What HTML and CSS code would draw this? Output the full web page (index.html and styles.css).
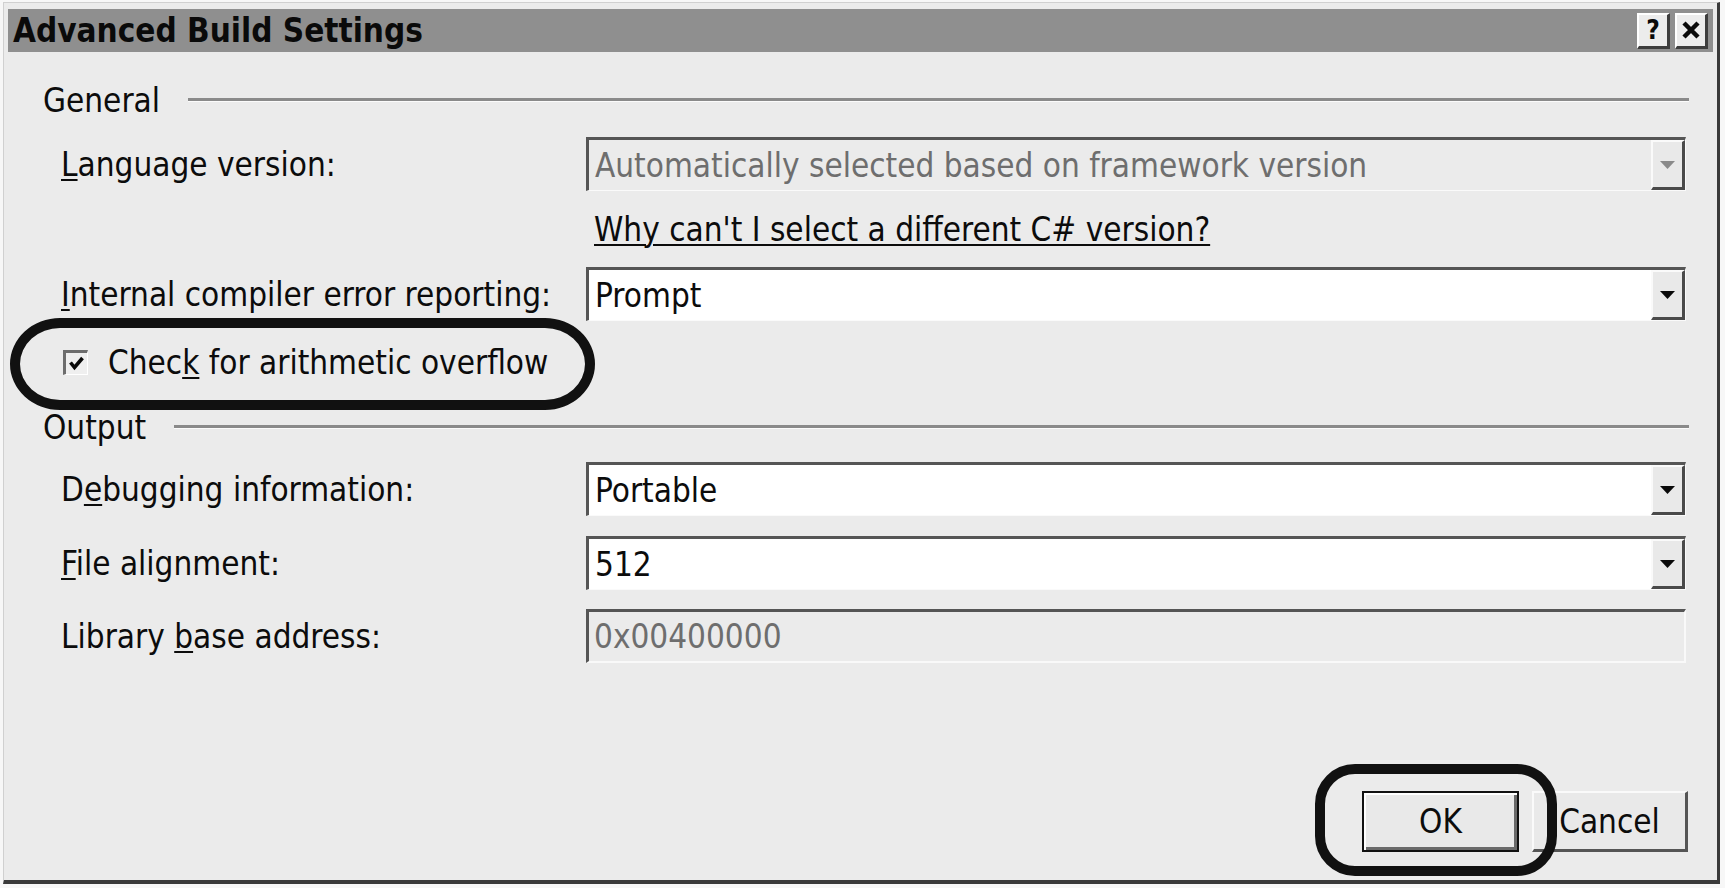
FILE: index.html
```html
<!DOCTYPE html>
<html lang="en">
<head>
<meta charset="utf-8">
<title>Advanced Build Settings</title>
<link rel="stylesheet" href="styles.css">
</head>
<body>
<div class="window">
  <div class="titlebar">
    <span class="title">Advanced Build Settings</span>
    <div class="caption-buttons">
      <span class="cap-btn help">?</span>
      <span class="cap-btn close">
        <svg width="18" height="18" viewBox="0 0 18 18"><path d="M2 2 L16 16 M16 2 L2 16" stroke="#0a0a0a" stroke-width="4.5" fill="none"/></svg>
      </span>
    </div>
  </div>
  <div class="content">
    <div class="group-header"><span class="group-title">General</span><span class="rule"></span></div>

    <div class="field f-lang">
      <span class="label"><u>L</u>anguage version:</span>
      <div class="combo disabled">
        <span class="value">Automatically selected based on framework version</span>
        <span class="drop"><svg width="15" height="8" viewBox="0 0 15 8"><polygon points="0,0 15,0 7.5,8" class="arrow"/></svg></span>
      </div>
    </div>

    <div class="field f-link">
      <span class="label"></span>
      <span class="link">Why can't I select a different C# version?</span>
    </div>

    <div class="field">
      <span class="label"><u>I</u>nternal compiler error reporting:</span>
      <div class="combo">
        <span class="value">Prompt</span>
        <span class="drop"><svg width="15" height="8" viewBox="0 0 15 8"><polygon points="0,0 15,0 7.5,8" class="arrow"/></svg></span>
      </div>
    </div>

    <div class="check-row">
      <span class="checkbox"><svg width="17" height="17" viewBox="0 0 17 17"><path d="M2.5 7.5 L6.5 12.5 L14.5 3" stroke="#0a0a0a" stroke-width="3.6" fill="none"/></svg></span>
      <span class="check-label">Chec<u>k</u> for arithmetic overflow</span>
    </div>

    <div class="group-header g-output"><span class="group-title">Output</span><span class="rule"></span></div>

    <div class="field f-gap">
      <span class="label">D<u>e</u>bugging information:</span>
      <div class="combo">
        <span class="value">Portable</span>
        <span class="drop"><svg width="15" height="8" viewBox="0 0 15 8"><polygon points="0,0 15,0 7.5,8" class="arrow"/></svg></span>
      </div>
    </div>

    <div class="field f-gap">
      <span class="label"><u>F</u>ile alignment:</span>
      <div class="combo">
        <span class="value">512</span>
        <span class="drop"><svg width="15" height="8" viewBox="0 0 15 8"><polygon points="0,0 15,0 7.5,8" class="arrow"/></svg></span>
      </div>
    </div>

    <div class="field f-gap f-last">
      <span class="label">Library <u>b</u>ase address:</span>
      <div class="textbox disabled">0x00400000</div>
    </div>

    <div class="buttons">
      <span class="btn default">OK</span>
      <span class="btn">Cancel</span>
    </div>

    <div class="mark mark-check"></div>
    <div class="mark mark-ok"></div>
  </div>
</div>
</body>
</html>
```

FILE: styles.css
```css
html, body {
  margin: 0;
  padding: 0;
}

body {
  background: #f7f7f7;
  font-family: "DejaVu Sans Condensed", "DejaVu Sans", sans-serif;
  font-stretch: condensed;
  color: #0c0c0c;
  width: 1725px;
  height: 888px;
  overflow: hidden;
}

.window {
  box-sizing: border-box;
  width: 1717px;
  height: 882px;
  margin: 2px 0 0 3px;
  background: #ebebeb;
  border-top: 1px solid #d0d0d0;
  border-left: 1px solid #d0d0d0;
  border-right: 3px solid #3a3a3a;
  border-bottom: 4px solid #3a3a3a;
  padding: 6px 4px 0 4px;
  display: flex;
  flex-direction: column;
}

.titlebar {
  height: 43px;
  background: #8f8f8f;
  display: flex;
  align-items: center;
  justify-content: space-between;
  padding: 0 5px;
  flex: none;
}

.title {
  font-weight: bold;
  font-size: 33px;
  color: #0a0a0a;
}

.caption-buttons {
  display: flex;
  gap: 5px;
}

.cap-btn {
  box-sizing: border-box;
  width: 33px;
  height: 36px;
  background: #ececec;
  border-top: 2px solid #ffffff;
  border-left: 2px solid #ffffff;
  border-right: 3px solid #3d3d3d;
  border-bottom: 3px solid #3d3d3d;
  display: flex;
  align-items: center;
  justify-content: center;
  font-family: "DejaVu Sans", sans-serif;
  font-weight: bold;
  font-size: 26px;
  color: #0a0a0a;
}

.content {
  position: relative;
  flex: 1;
  padding: 33px 24px 0 35px;
  font-size: 33px;
}

.group-header {
  display: flex;
  align-items: center;
  height: 30px;
}

.rule {
  flex: 1;
  margin-left: 28px;
  border-top: 3px solid #8a8a8a;
  border-bottom: 1px solid #fbfbfb;
}

.g-output {
  margin-top: 29px;
}

.field {
  display: grid;
  grid-template-columns: 525px 1fr;
  align-items: center;
  margin: 0 3px 0 18px;
}

.f-lang {
  margin-top: 22px;
}

.f-link {
  height: 76px;
}

.f-gap {
  margin-top: 20px;
}

.f-last {
  margin-top: 19px;
}

.label {
  white-space: nowrap;
}

.label u,
.check-label u {
  text-decoration-thickness: 2px;
  text-underline-offset: 3px;
}

.link {
  padding-left: 8px;
  text-decoration: underline;
  text-decoration-thickness: 2px;
  text-underline-offset: 3px;
  white-space: nowrap;
}

.combo,
.textbox {
  box-sizing: border-box;
  height: 54px;
  display: flex;
  align-items: center;
  background: #ffffff;
  border-top: 3px solid #555555;
  border-left: 3px solid #555555;
  border-right: 1px solid #fafafa;
  border-bottom: 1px solid #fafafa;
  padding-left: 6px;
  white-space: nowrap;
}

.combo .value {
  flex: 1;
}

.drop {
  box-sizing: border-box;
  width: 34px;
  align-self: stretch;
  background: #e9e9e9;
  border-top: 2px solid #fafafa;
  border-left: 2px solid #fafafa;
  border-right: 3px solid #4a4a4a;
  border-bottom: 3px solid #4a4a4a;
  display: flex;
  align-items: center;
  justify-content: center;
}

.arrow {
  fill: #0a0a0a;
}

.disabled {
  background: #ebebeb;
  color: #6e6e6e;
}

.disabled .arrow {
  fill: #8a8a8a;
}

.textbox {
  border-right: 2px solid #f9f9f9;
  border-bottom: 2px solid #f9f9f9;
  padding-left: 5px;
}

.check-row {
  display: flex;
  align-items: center;
  height: 42px;
  margin: 20px 0 0 20px;
  gap: 20px;
}

.checkbox {
  box-sizing: border-box;
  width: 25px;
  height: 25px;
  background: #efefef;
  border-top: 3px solid #6d6d6d;
  border-left: 3px solid #6d6d6d;
  border-right: 1px solid #ffffff;
  border-bottom: 1px solid #ffffff;
  display: flex;
  align-items: center;
  justify-content: center;
}

.buttons {
  display: flex;
  justify-content: flex-end;
  gap: 13px;
  margin-top: 128px;
  margin-right: 1px;
}

.btn {
  box-sizing: border-box;
  height: 61px;
  display: flex;
  align-items: center;
  justify-content: center;
  background: #e9e9e9;
}

.btn.default {
  width: 157px;
  border: 2px solid #111;
  box-shadow: inset 2px 2px 0 #ffffff, inset -3px -3px 0 #6a6a6a;
}

.btn:not(.default) {
  width: 156px;
  border-top: 2px solid #fafafa;
  border-left: 2px solid #fafafa;
  border-right: 3px solid #555;
  border-bottom: 3px solid #555;
}

.mark {
  position: absolute;
  box-sizing: border-box;
  border: 10px solid #111;
}

.mark-check {
  left: 2px;
  top: 266px;
  width: 585px;
  height: 92px;
  border-radius: 50px / 46px;
}

.mark-ok {
  left: 1307px;
  top: 712px;
  width: 242px;
  height: 112px;
  border-radius: 40px;
}
```
